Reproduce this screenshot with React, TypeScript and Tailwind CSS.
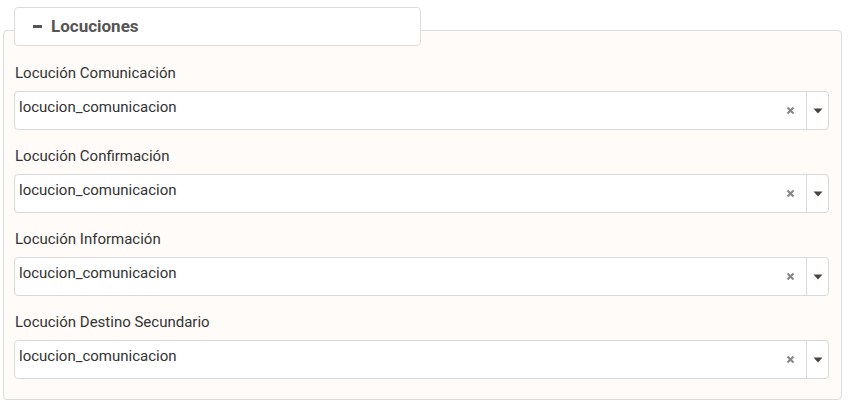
const fields = [
  "Locución Comunicación",
  "Locución Confirmación",
  "Locución Información",
  "Locución Destino Secundario",
];

function SelectBox({ value }: { value: string }) {
  return (
    <div className="flex h-[39px] items-stretch rounded-[4px] border border-[#d9d9d9] bg-white">
      <div className="flex flex-1 items-start pl-[4px] pt-[4px] text-[15px] text-[#333]">
        {value}
      </div>
      <div className="flex w-[31px] items-center justify-center">
        <svg width="9" height="9" viewBox="0 0 9 9">
          <path d="M1.5 1.5 L7.5 7.5 M7.5 1.5 L1.5 7.5" stroke="#888" strokeWidth="2.2" />
        </svg>
      </div>
      <div className="flex w-[22px] items-center justify-center border-l border-[#d9d9d9]">
        <svg width="10" height="6" viewBox="0 0 10 6">
          <path d="M0.5 0.5 L9.5 0.5 L5 5.5 Z" fill="#444" />
        </svg>
      </div>
    </div>
  );
}

export default function App() {
  return (
    <div className="min-h-[409px] bg-white pl-[3px] pr-[7px] pt-[7px] font-['Roboto',sans-serif]">
      {/* legend */}
      <div className="relative z-10 mb-[-16px] ml-[11px] flex h-[39px] w-[407px] items-center rounded-[4px] border border-[#dcdcdc] bg-white pl-[18px]">
        <span className="mr-[9px] inline-block h-[3px] w-[9px] bg-[#555]" />
        <span className="text-[17px] font-bold text-[#555]">Locuciones</span>
      </div>

      <div className="rounded-[4px] border border-[#dcdcdc] bg-[#fffbf8] pb-[20px] pl-[10px] pr-[12px] pt-[32px]">
        <div className="flex flex-col gap-[16px]">
          {fields.map((label) => (
            <div key={label}>
              <div className="mb-[8px] h-[20px] pl-[1px] text-[15px] leading-[20px] text-[#333]">
                {label}
              </div>
              <SelectBox value="locucion_comunicacion" />
            </div>
          ))}
        </div>
      </div>
    </div>
  );
}
